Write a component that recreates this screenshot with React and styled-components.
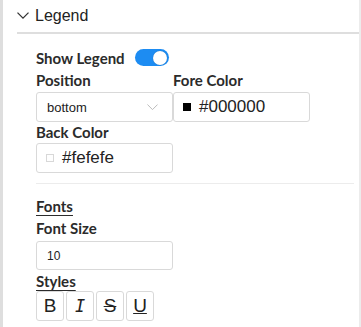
import React from "react";
import styled, { createGlobalStyle } from "styled-components";

const Global = createGlobalStyle`
  html, body { margin: 0; padding: 0; background: #fff; }
  body { font-family: "Liberation Sans", Arial, sans-serif; }
`;

const Page = styled.div`
  display: flex;
  width: 361px;
  height: 327px;
  overflow: hidden;
`;

const Strip = styled.div`
  width: 3px;
  background: #dedede;
  flex: none;
`;

const Panel = styled.div`
  flex: 1;
  border-right: 2px solid #ececec;
  padding-left: 14px;
`;

const Header = styled.div`
  height: 32px;
  display: flex;
  align-items: center;
  border-bottom: 2px solid #dedede;
  gap: 6px;
  color: #222;
  font-size: 16px;
`;

const Body = styled.div`
  padding-left: 19px;
  padding-top: 13px;
`;

const Label = styled.div`
  font-family: "Lato", sans-serif;
  font-weight: 700;
  font-size: 15px;
  color: #2b2b2b;
  line-height: 16px;
  margin-top: ${(p) => p.$mt || 0}px;
  text-decoration: ${(p) => (p.$u ? "underline" : "none")};
  text-underline-offset: 3px;
  text-decoration-thickness: 1px;
`;

const Row = styled.div`
  display: flex;
  align-items: center;
  gap: 10px;
  height: 21px;
`;

const Toggle = styled.div`
  width: 34px;
  height: 17px;
  border-radius: 9px;
  background: #1d8cf2;
  position: relative;
`;

const Knob = styled.div`
  position: absolute;
  right: 2px;
  top: 1.5px;
  width: 14px;
  height: 14px;
  border-radius: 50%;
  background: #fff;
  box-shadow: 0 0 1px rgba(0, 0, 0, 0.3);
`;

const Grid = styled.div`
  display: grid;
  grid-template-columns: 137px 138px;
  margin-top: 4px;
`;

const Field = styled.div`
  display: flex;
  flex-direction: column;
  gap: ${(p) => p.$gap ?? 4}px;
  margin-top: ${(p) => p.$mt || 0}px;
`;

const Box = styled.div`
  box-sizing: border-box;
  width: 137px;
  height: ${(p) => p.$h || 30}px;
  border: 1px solid #d9d9d9;
  border-radius: 3px;
  display: flex;
  align-items: center;
  padding-left: ${(p) => p.$pl || 9}px;
  gap: 8px;
  color: #222;
  font-size: ${(p) => p.$fs || 13}px;
`;

const Swatch = styled.span`
  width: 8px;
  height: 8px;
  background: ${(p) => p.$c};
  border: 1px solid ${(p) => (p.$c === "#000" ? "#000" : "#d8d8d8")};
  box-sizing: border-box;
  flex: none;
`;

const Spacer = styled.div`
  flex: 1;
`;

const Caret = styled.span`
  display: flex;
  margin-right: 14px;
`;

const Divider = styled.div`
  height: 1px;
  background: #ececec;
  margin: 10px 5px 0 0;
`;

const Buttons = styled.div`
  display: flex;
  gap: 2px;
`;

const Btn = styled.button`
  box-sizing: border-box;
  width: 28px;
  height: 30px;
  border: 1px solid #d9d9d9;
  border-radius: 3px;
  background: #fff;
  padding: 0;
  display: flex;
  align-items: center;
  justify-content: center;
  font-family: ${(p) =>
    p.$i ? '"DejaVu Sans Mono", monospace' : '"Liberation Sans", Arial, sans-serif'};
  font-size: ${(p) => (p.$i ? 17 : 19)}px;
  color: #222;
  font-style: ${(p) => (p.$i ? "italic" : "normal")};
  text-decoration: ${(p) => p.$d || "none"};
  text-decoration-thickness: 1px;
`;

const Chevron = ({ size = 12, color = "#333", sw = 1.3 }) => (
  <svg width={size} height={size * 0.6} viewBox="0 0 12 7" fill="none">
    <path d="M0.5 0.5 L6 6 L11.5 0.5" stroke={color} strokeWidth={sw} />
  </svg>
);

export default function App() {
  return (
    <Page>
      <Global />
      <Strip />
      <Panel>
        <Header>
          <Chevron />
          <span>Legend</span>
        </Header>
        <Body>
          <Row>
            <Label>Show Legend</Label>
            <Toggle>
              <Knob />
            </Toggle>
          </Row>
          <Grid>
            <Field>
              <Label>Position</Label>
              <Box $pl={10}>
                <span>bottom</span>
                <Spacer />
                <Caret>
                  <Chevron size={11} color="#b5b5b5" sw={1} />
                </Caret>
              </Box>
            </Field>
            <Field>
              <Label>Fore Color</Label>
              <Box $fs={17}>
                <Swatch $c="#000" />
                <span>#000000</span>
              </Box>
            </Field>
          </Grid>
          <Field $mt={2} $gap={3}>
            <Label>Back Color</Label>
            <Box $fs={17}>
              <Swatch $c="#fefefe" />
              <span>#fefefe</span>
            </Box>
          </Field>
          <Divider />
          <Label $u $mt={14}>Fonts</Label>
          <Field $mt={6} $gap={5}>
            <Label>Font Size</Label>
            <Box $h={29} $pl={10} $fs={12}>
              <span>10</span>
            </Box>
          </Field>
          <Field $mt={3} $gap={2}>
            <Label $u>Styles</Label>
            <Buttons>
              <Btn>B</Btn>
              <Btn $i>I</Btn>
              <Btn $d="line-through">S</Btn>
              <Btn $d="underline">U</Btn>
            </Buttons>
          </Field>
        </Body>
      </Panel>
    </Page>
  );
}
